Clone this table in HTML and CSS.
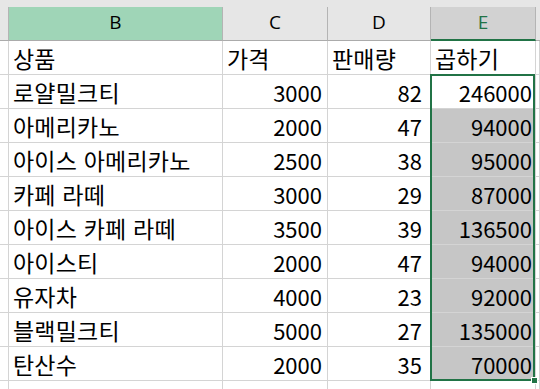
FILE: index.html
```html
<!DOCTYPE html>
<html lang="ko">
<head>
<meta charset="utf-8">
<title>Sheet</title>
<link rel="stylesheet" href="styles.css">
</head>
<body>
<div class="sheet">
  <div class="band"></div>
  <div class="grid">
    <div class="h corner"></div>
    <div class="h hb">B</div>
    <div class="h">C</div>
    <div class="h">D</div>
    <div class="h he">E</div>
    <div class="h hf"></div>

    <div class="c lead"></div><div class="c t">상품</div><div class="c t">가격</div><div class="c t">판매량</div><div class="c t">곱하기</div><div class="c"></div>
    <div class="c lead"></div><div class="c t">로얄밀크티</div><div class="c n nc">3000</div><div class="c n nd">82</div><div class="c n ne">246000</div><div class="c"></div>
    <div class="c lead"></div><div class="c t">아메리카노</div><div class="c n nc">2000</div><div class="c n nd">47</div><div class="c n ne s">94000</div><div class="c"></div>
    <div class="c lead"></div><div class="c t">아이스 아메리카노</div><div class="c n nc">2500</div><div class="c n nd">38</div><div class="c n ne s">95000</div><div class="c"></div>
    <div class="c lead"></div><div class="c t">카페 라떼</div><div class="c n nc">3000</div><div class="c n nd">29</div><div class="c n ne s">87000</div><div class="c"></div>
    <div class="c lead"></div><div class="c t">아이스 카페 라떼</div><div class="c n nc">3500</div><div class="c n nd">39</div><div class="c n ne s">136500</div><div class="c"></div>
    <div class="c lead"></div><div class="c t">아이스티</div><div class="c n nc">2000</div><div class="c n nd">47</div><div class="c n ne s">94000</div><div class="c"></div>
    <div class="c lead"></div><div class="c t">유자차</div><div class="c n nc">4000</div><div class="c n nd">23</div><div class="c n ne s">92000</div><div class="c"></div>
    <div class="c lead"></div><div class="c t">블랙밀크티</div><div class="c n nc">5000</div><div class="c n nd">27</div><div class="c n ne s">135000</div><div class="c"></div>
    <div class="c lead"></div><div class="c t">탄산수</div><div class="c n nc">2000</div><div class="c n nd">35</div><div class="c n ne s">70000</div><div class="c"></div>
    <div class="c lead"></div><div class="c"></div><div class="c"></div><div class="c"></div><div class="c"></div><div class="c"></div>
  </div>
  <div class="sel"><span class="handle"></span></div>
</div>
</body>
</html>
```
FILE: styles.css
```css
html, body {
  margin: 0;
  padding: 0;
  background: #ffffff;
}
.sheet {
  position: relative;
  width: 540px;
  height: 389px;
  overflow: hidden;
  font-family: "Noto Sans CJK KR", "Noto Sans", sans-serif;
}
.band {
  height: 7px;
  background: #e6e6e6;
}
.grid {
  display: grid;
  grid-template-columns: 9px 214px 105px 103px 105px 1fr;
  grid-auto-rows: 34px;
}
.h {
  box-sizing: border-box;
  background: #e6e6e6;
  border-right: 1px solid #b4b4b4;
  border-bottom: 1px solid #ababab;
  font-family: "Open Sans", "Noto Sans", sans-serif;
  font-size: 19px;
  line-height: 30px;
  text-align: center;
  color: #000;
}
.h.hb {
  background: #9fd5b7;
}
.h.he {
  background: #d2d2d2;
  color: #217346;
  border-bottom: 2px solid #217346;
}
.h.hf {
  border-right: none;
}
.c {
  box-sizing: border-box;
  border-right: 1px solid #d4d4d4;
  border-bottom: 1px solid #d4d4d4;
  font-size: 22px;
  line-height: 32px;
  padding-top: 1px;
  color: #000;
  white-space: nowrap;
  overflow: hidden;
}
.c.t {
  padding-left: 4px;
  font-size: 23px;
  letter-spacing: 0.2px;
}
.c.n {
  text-align: right;
}
.c.nc {
  padding-right: 5px;
}
.c.nd {
  padding-right: 8px;
}
.c.ne {
  padding-right: 3px;
}
.c.s {
  background: #c6c6c6;
}
.sel {
  position: absolute;
  left: 430px;
  top: 74px;
  width: 105px;
  height: 307px;
  box-sizing: border-box;
  border: 2px solid #217346;
}
.handle {
  position: absolute;
  right: -5px;
  bottom: -5px;
  width: 7px;
  height: 7px;
  box-sizing: border-box;
  background: #217346;
  border: 1px solid #ffffff;
}
```
